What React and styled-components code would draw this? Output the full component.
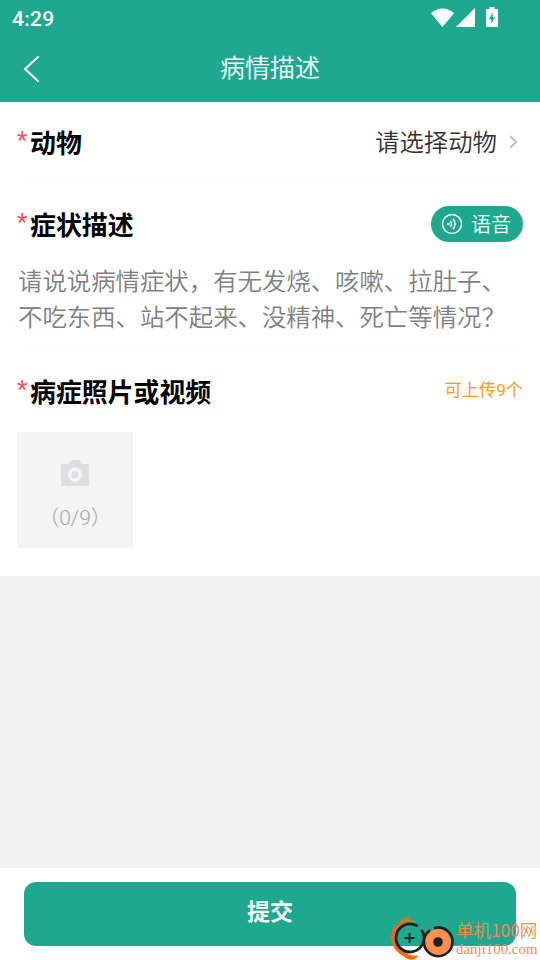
import styled, { createGlobalStyle } from 'styled-components';

const App = () => {
    return (
        <>
            <GlobalStyle />
            <Page>
                <Header>
                    <StatusBar>
                        <Time>4:29</Time>
                        <StatusIcons />
                    </StatusBar>
                    <NavBar>
                        <BackIcon />
                        <NavTitle>病情描述</NavTitle>
                    </NavBar>
                </Header>

                <AnimalRow>
                    <FieldLabel text="动物" />
                    <Picker>
                        <span>请选择动物</span>
                        <ArrowIcon />
                    </Picker>
                </AnimalRow>
                <Divider />

                <SymptomBox>
                    <SymptomHead>
                        <FieldLabel text="症状描述" />
                        <VoiceBtn>
                            <VoiceIcon />
                            <span>语音</span>
                        </VoiceBtn>
                    </SymptomHead>
                    <Placeholder>
                        请说说病情症状，有无发烧、咳嗽、拉肚子、
                        <br />
                        不吃东西、站不起来、没精神、死亡等情况？
                    </Placeholder>
                </SymptomBox>
                <Divider />

                <PhotoBox>
                    <PhotoHead>
                        <FieldLabel text="病症照片或视频" />
                        <UploadTip>可上传9个</UploadTip>
                    </PhotoHead>
                    <Uploader>
                        <CameraIcon />
                        <Count>（0/9）</Count>
                    </Uploader>
                </PhotoBox>

                <Blank />

                <Footer>
                    <SubmitBtn>提交</SubmitBtn>
                </Footer>

                <Watermark>
                    <WatermarkLogo />
                    <WatermarkText>
                        <SiteName>单机100网</SiteName>
                        <SiteUrl>danji100.com</SiteUrl>
                    </WatermarkText>
                </Watermark>
            </Page>
        </>
    );
};

export default App;

const FieldLabel = ({ text }) => (
    <Label>
        <Star>*</Star>
        {text}
    </Label>
);

const StatusIcons = () => (
    <svg width="70" height="22" viewBox="0 0 70 22" fill="#fff" overflow="visible">
        <path d="M1 5.2C7.8-1.2 17.2-1.2 24 5.2L12.5 19Z" />
        <path d="M45 0V19H26Z" />
        <path
            fillRule="evenodd"
            d="M59.5 -1h5v2h2.2q1.3 0 1.3 1.3V17.7q0 1.3-1.3 1.3h-9.4q-1.3 0-1.3-1.3V2.3q0-1.3 1.3-1.3h2.2zM62.7 4.6L58.9 11.2h2.4v4.6l3.8-6.6h-2.4z"
        />
    </svg>
);

const BackIcon = () => (
    <svg width="18" height="28" viewBox="0 0 18 28" fill="none" stroke="#fff" strokeWidth="2">
        <path d="M15 2L2 14L15 26" strokeLinecap="round" />
    </svg>
);

const ArrowIcon = () => (
    <svg width="9" height="14" viewBox="0 0 9 14" fill="none" stroke="#bfbfbf" strokeWidth="2">
        <path d="M1.2 1.2L7.2 7L1.2 12.8" />
    </svg>
);

const VoiceIcon = () => (
    <svg width="22" height="22" viewBox="0 0 22 22" fill="none" stroke="#fff" strokeWidth="1.4">
        <circle cx="11" cy="11" r="9.5" />
        <circle cx="7.3" cy="11" r="1.2" fill="#fff" stroke="none" />
        <path d="M9.4 8.2Q11.6 11 9.4 13.8M12 5.8Q16 11 12 16.2" />
    </svg>
);

const CameraIcon = () => (
    <svg width="28" height="26" viewBox="0 0 28 26">
        <path
            fill="#dcdee0"
            d="M1 4H7.5L9 1.2Q9.7 0 11 0H17Q18.3 0 19 1.2L20.5 4H27Q28 4 28 5V25Q28 26 27 26H1Q0 26 0 25V5Q0 4 1 4Z"
        />
        <circle cx="14" cy="14.7" r="5.3" fill="none" stroke="#f4f4f4" strokeWidth="3.6" />
    </svg>
);

const WatermarkLogo = () => (
    <svg width="68" height="46" viewBox="0 0 68 46" fill="none">
        <path
            d="M25 7.5Q21 2 16 5Q13 6 12 9Q3 13 3.5 25Q5 36 14 41Q22 47 26 45Q29 44 30 42Q22 43 15 37Q6 30 6.5 22Q8 13 14 9Q18 7 25 7.5Z"
            fill="#ff6a0b"
            stroke="#ff6a0b"
            strokeWidth="0.6"
        />
        <path d="M28.6 11.6A14 14 0 1 0 33.9 16.6" stroke="#231f20" strokeWidth="2.8" strokeLinecap="round" />
        <path d="M16.5 24h10M21.5 19v10" stroke="#231f20" strokeWidth="1.8" />
        <circle cx="50" cy="28" r="13" fill="#ff904b" />
        <path d="M46.8 13.9A14.3 14.3 0 1 1 41.2 16.7" stroke="#231f20" strokeWidth="2.6" strokeLinecap="round" />
        <circle cx="50" cy="28" r="4.8" fill="#231f20" />
    </svg>
);

const GlobalStyle = createGlobalStyle`
    body {
        margin: 0;
        font-family: Roboto, "Noto Sans CJK SC", sans-serif;
        font-weight: 350;
        color: #323233;
    }

    * {
        box-sizing: border-box;
    }

    svg {
        display: block;
        flex-shrink: 0;
    }
`;

const Page = styled.div`
    position: relative;
    display: flex;
    flex-direction: column;
    width: 540px;
    height: 960px;
    overflow: hidden;
    background: #fff;
`;

const Header = styled.header`
    height: 102px;
    background: #1fa890;
    color: #fff;
`;

const StatusBar = styled.div`
    display: flex;
    align-items: flex-start;
    justify-content: space-between;
    height: 38px;
    padding: 8px 40px 0 12px;
`;

const Time = styled.span`
    font-size: 21px;
    font-weight: 500;
    line-height: 22px;
    letter-spacing: 0.3px;
`;

const NavBar = styled.div`
    display: grid;
    grid-template-columns: 18px 1fr 18px;
    align-items: center;
    height: 62px;
    padding: 0 23px;
`;

const NavTitle = styled.h1`
    margin: 0;
    font-size: 25px;
    font-weight: 350;
    line-height: 36px;
    text-align: center;
`;

const Label = styled.div`
    display: flex;
    align-items: center;
    padding-top: 3px;
    color: #000;
    font-size: 25.9px;
    font-weight: 700;
    line-height: 36px;
`;

const Star = styled.span`
    width: 13px;
    margin-top: -8px;
    color: #ff4c5e;
    font-size: 24px;
    font-weight: 400;
`;

const AnimalRow = styled.div`
    display: flex;
    align-items: center;
    justify-content: space-between;
    height: 80px;
    padding: 0 22px 0 17px;
`;

const Picker = styled.div`
    display: flex;
    align-items: center;
    gap: 12px;
    font-size: 24.4px;
    line-height: 36px;

    span {
        padding-top: 2px;
    }
`;

const Divider = styled.div`
    height: 1px;
    margin: 0 24px;
    background: #f8f8f8;
`;

const SymptomBox = styled.section`
    height: 167px;
    padding: 23px 17px 0;
`;

const SymptomHead = styled.div`
    display: flex;
    align-items: center;
    justify-content: space-between;
    height: 36px;
`;

const VoiceBtn = styled.button`
    display: flex;
    align-items: center;
    gap: 8px;
    width: 92px;
    height: 36px;
    padding: 0 0 0 10px;
    border: 0;
    border-radius: 18px;
    background: #1fa890;
    color: #fff;
    font-family: inherit;
    font-size: 20px;
    font-weight: 350;
    line-height: 36px;

    span {
        padding-top: 1px;
    }
`;

const Placeholder = styled.p`
    margin: 22px 0 0 1px;
    color: #808080;
    font-size: 24.4px;
    line-height: 36px;
    white-space: nowrap;
`;

const PhotoBox = styled.section`
    height: 225px;
    padding: 22px 17px 0;
`;

const PhotoHead = styled.div`
    display: flex;
    align-items: center;
    justify-content: space-between;
    height: 36px;
`;

const UploadTip = styled.span`
    padding-bottom: 5px;
    color: #ff9a14;
    font-size: 17.2px;
    font-weight: 400;
`;

const Uploader = styled.div`
    display: flex;
    flex-direction: column;
    align-items: center;
    width: 116px;
    height: 116px;
    margin-top: 23px;
    padding-top: 28px;
    background: #f4f4f4;
`;

const Count = styled.span`
    margin-top: 17px;
    color: #a8a8a8;
    font-size: 21px;
    font-weight: 300;
    line-height: 30px;
    white-space: nowrap;
`;

const Blank = styled.div`
    flex: 1;
    background: #f2f2f2;
`;

const Footer = styled.footer`
    height: 92px;
    padding: 14px 24px;
`;

const SubmitBtn = styled.button`
    width: 100%;
    height: 64px;
    padding: 0 0 8px;
    border: 0;
    border-radius: 12px;
    background: #1fa890;
    color: #fff;
    font-family: inherit;
    font-size: 23px;
    font-weight: 700;
`;

const Watermark = styled.div`
    position: absolute;
    left: 388px;
    bottom: 0;
    display: flex;
    align-items: flex-start;
`;

const WatermarkText = styled.div`
    display: flex;
    flex-direction: column;
    padding-top: 5px;
    color: #f58a52;
    white-space: nowrap;
`;

const SiteName = styled.span`
    font-family: "Noto Sans CJK SC", sans-serif;
    font-size: 17.5px;
    line-height: 22px;
`;

const SiteUrl = styled.span`
    font-family: "Liberation Serif", serif;
    font-size: 14.9px;
    line-height: 16px;
`;
